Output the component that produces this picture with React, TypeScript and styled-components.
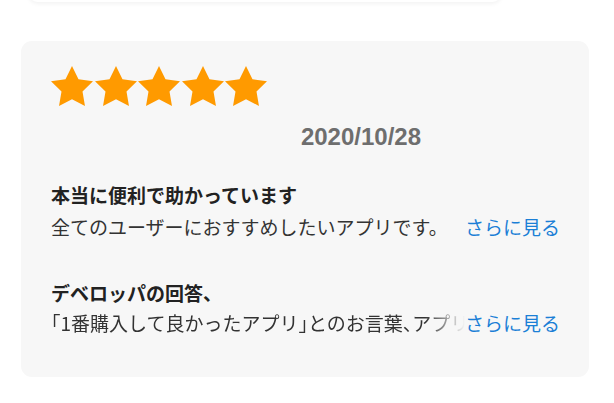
import React from "react";
import styled, { createGlobalStyle } from "styled-components";

const GlobalStyle = createGlobalStyle`
    html, body {
        margin: 0;
        padding: 0;
        background: #ffffff;
    }
    body {
        font-family: "Noto Sans CJK JP", "Noto Sans", sans-serif;
        color: #333333;
    }
`;

const Page = styled.div`
    width: 614px;
    height: 403px;
    overflow: hidden;
    display: flex;
    flex-direction: column;
`;

// bottom edge of the card above, cut off by the viewport
const PrevCard = styled.div`
    width: 474px;
    height: 20px;
    margin: -18px 0 0 28px;
    background: #ffffff;
    border-radius: 0 0 10px 10px;
    box-shadow: 0 2px 4px rgba(0, 0, 0, 0.05);
`;

const Card = styled.section`
    width: 568px;
    margin: 39px 0 0 21px;
    padding: 25px 29px 39px 30px;
    box-sizing: border-box;
    background: #f7f7f7;
    border-radius: 11px;
    display: flex;
    flex-direction: column;
`;

const Header = styled.div`
    width: 370px;
    display: flex;
    flex-direction: column;
`;

const Stars = styled.div`
    display: flex;
    gap: 1.5px;
    height: 40px;
`;

const DateText = styled.div`
    margin-top: 16px;
    align-self: flex-end;
    font-family: "Liberation Sans", Arial, sans-serif;
    font-weight: 700;
    font-size: 24px;
    line-height: 30px;
    color: #6e6e6e;
`;

const Block = styled.div<{ $gap: number }>`
    margin-top: ${(p) => p.$gap}px;
    display: flex;
    flex-direction: column;
`;

const Heading = styled.div<{ $lh: number }>`
    font-size: 19px;
    font-weight: 700;
    line-height: ${(p) => p.$lh}px;
    color: #222222;
`;

const Row = styled.div<{ $lh: number }>`
    display: flex;
    align-items: center;
    line-height: ${(p) => p.$lh}px;
    font-size: 19px;
`;

const Body = styled.div<{ $fade?: boolean }>`
    flex: 1;
    min-width: 0;
    white-space: nowrap;
    overflow: hidden;
    color: #333333;
    ${(p) =>
        p.$fade &&
        `
        -webkit-mask-image: linear-gradient(to right, #000 calc(100% - 40px), transparent 100%);
        mask-image: linear-gradient(to right, #000 calc(100% - 40px), transparent 100%);
    `}
`;

// half-width brackets and commas, as the app's font sets them
const Half = styled.span`
    font-feature-settings: "halt" 1;
`;

const MoreLink = styled.a`
    flex: none;
    color: #1b7fd6;
    text-decoration: none;
    cursor: pointer;
`;

const Star = () => (
    <svg width="42" height="40" viewBox="2 2 20 19.02">
        <path
            d="M12 2l3.09 6.26L22 9.27l-5 4.87 1.18 6.88L12 17.77l-6.18 3.25L7 14.14 2 9.27l6.91-1.01L12 2z"
            fill="#ff9a00"
        />
    </svg>
);

const App = () => {
    const rating = 5;

    return (
        <>
            <GlobalStyle />
            <Page>
                <PrevCard />
                <Card>
                    <Header>
                        <Stars>
                            {Array.from({ length: rating }).map((_, i) => (
                                <Star key={i} />
                            ))}
                        </Stars>
                        <DateText>2020/10/28</DateText>
                    </Header>

                    <Block $gap={27}>
                        <Heading $lh={32}>本当に便利で助かっています</Heading>
                        <Row $lh={32}>
                            <Body>全てのユーザーにおすすめしたいアプリです。</Body>
                            <MoreLink>さらに見る</MoreLink>
                        </Row>
                    </Block>

                    <Block $gap={35}>
                        <Heading $lh={30}>デベロッパの回答、</Heading>
                        <Row $lh={30}>
                            <Body $fade>
                                <Half>「</Half>1番購入して良かったアプリ<Half>」</Half>とのお言葉<Half>、</Half>アプリをご利用いただきありがとうございます。
                            </Body>
                            <MoreLink>さらに見る</MoreLink>
                        </Row>
                    </Block>
                </Card>
            </Page>
        </>
    );
};

export default App;
